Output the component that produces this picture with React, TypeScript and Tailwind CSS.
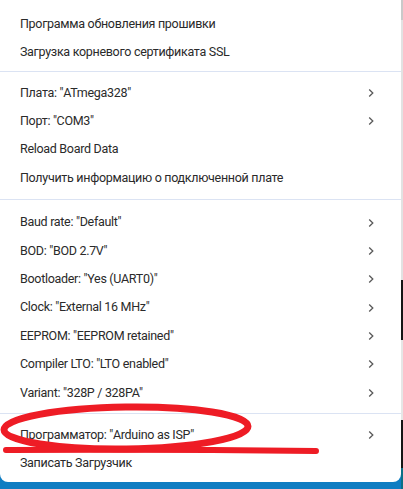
import React from "react";

type Item = { label: string; sub?: boolean };

const groups: Item[][] = [
  [
    { label: "Программа обновления прошивки" },
    { label: "Загрузка корневого сертификата SSL" },
  ],
  [
    { label: 'Плата: "ATmega328"', sub: true },
    { label: 'Порт: "COM3"', sub: true },
    { label: "Reload Board Data" },
    { label: "Получить информацию о подключенной плате" },
  ],
  [
    { label: 'Baud rate: "Default"', sub: true },
    { label: 'BOD: "BOD 2.7V"', sub: true },
    { label: 'Bootloader: "Yes (UART0)"', sub: true },
    { label: 'Clock: "External 16 MHz"', sub: true },
    { label: 'EEPROM: "EEPROM retained"', sub: true },
    { label: 'Compiler LTO: "LTO enabled"', sub: true },
    { label: 'Variant: "328P / 328PA"', sub: true },
  ],
  [
    { label: 'Программатор: "Arduino as ISP"', sub: true },
    { label: "Записать Загрузчик" },
  ],
];

const groupClass = [
  "flex flex-col pt-[10px] pb-[4px] border-b border-[#dbe3f3]",
  "flex flex-col pt-[7px] pb-[7px] border-b border-[#dbe3f3]",
  "flex flex-col pt-[8px] pb-[6px] border-b border-[#dbe3f3]",
  "flex flex-col pt-[7px] pb-[5px]",
];

function Chevron() {
  return (
    <svg width="8" height="10" viewBox="0 0 8 10" className="shrink-0">
      <path d="M2.2 1.5 L5.8 5 L2.2 8.5" fill="none" stroke="#5a5a5a" strokeWidth="1.3" />
    </svg>
  );
}

export default function App() {
  return (
    <div
      className="relative w-[403px] h-[489px] overflow-hidden bg-[#0f7dc2] flex"
      style={{ fontFamily: 'Roboto, "Noto Sans", sans-serif' }}
    >
      <div className="w-[401px] h-[482px] bg-white rounded-b-[8px] flex flex-col">
        {groups.map((g, gi) => (
          <div key={gi} className={groupClass[gi]}>
            {g.map((it) => (
              <div key={it.label} className="h-[28.4px] flex items-center pl-[20px] pr-[26px]">
                <span className="flex-1 text-[12.5px] tracking-[-0.3px] text-[#2a2a2a] whitespace-nowrap">{it.label}</span>
                {it.sub && <Chevron />}
              </div>
            ))}
          </div>
        ))}
      </div>
      <div className="w-[2px] h-[489px] flex flex-col">
        <div className="h-[20px] bg-[#c9c9c9]" />
        <div className="h-[260px] bg-[#e2e2e2]" />
        <div className="h-[60px] bg-[#151515]" />
        <div className="h-[80px] bg-[#e6e6e6]" />
        <div className="h-[48px] bg-[#151515]" />
        <div className="flex-1 bg-[#0b6f86]" />
      </div>
      <svg
        className="absolute left-0 top-0 pointer-events-none"
        width="403"
        height="489"
        viewBox="0 0 403 489"
      >
        <ellipse cx="126" cy="428" rx="122" ry="21" fill="none" stroke="#ee1c25" strokeWidth="7" transform="rotate(-0.8 126 428)" />
        <path d="M6 450 Q160 449 316 451" fill="none" stroke="#ee1c25" strokeWidth="6" strokeLinecap="round" />
      </svg>
    </div>
  );
}
